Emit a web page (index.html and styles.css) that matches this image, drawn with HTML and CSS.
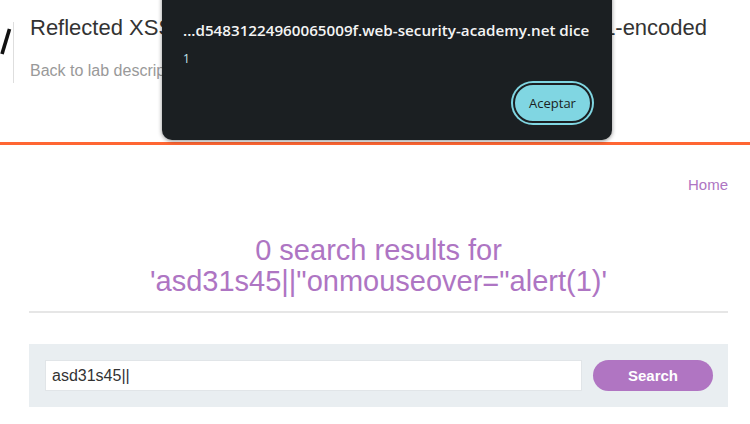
FILE: index.html
```html
<!DOCTYPE html>
<html lang="en">
<head>
<meta charset="utf-8">
<title>Reflected XSS into attribute with angle brackets HTML-encoded</title>
<link rel="stylesheet" href="styles.css">
</head>
<body>
<header class="academy-header">
  <div class="logo">
    <svg width="13" height="60" viewBox="0 0 13 60"><path d="M9.5 29 L2 54" stroke="#111" stroke-width="3.6" fill="none"/></svg>
  </div>
  <div class="divider"></div>
  <div class="title-block">
    <h2 class="lab-title">Reflected XSS<span class="title-rest"> into attribute with angle brackets HTML-encoded</span></h2>
    <a class="back-link" href="#">Back to lab description</a>
  </div>
</header>

<div class="dialog">
  <div class="dialog-title">...d54831224960065009f.web-security-academy.net dice</div>
  <div class="dialog-msg">1</div>
  <div class="dialog-actions">
    <button class="dialog-btn">Aceptar</button>
  </div>
</div>

<main class="container">
  <nav class="top-links"><a href="#">Home</a></nav>
  <section class="results">
    <h1 class="results-title">0 search results for<br>'asd31s45||"onmouseover="alert(1)'</h1>
    <hr class="rule">
  </section>
  <section class="search">
    <form class="search-form">
      <input class="search-input" type="text" value="asd31s45||">
      <button class="search-btn" type="button">Search</button>
    </form>
  </section>
</main>
</body>
</html>
```

FILE: styles.css
```css
* { box-sizing: border-box; }
html, body { margin: 0; padding: 0; background: #fff; }
body {
  font-family: "Liberation Sans", Arial, sans-serif;
  color: #333;
  width: 750px;
  height: 424px;
  overflow: hidden;
  position: relative;
}

.academy-header {
  display: flex;
  height: 145px;
  border-bottom: 3px solid #ff6633;
}
.logo { width: 13px; }
.logo svg { display: block; }
.divider {
  width: 1px;
  height: 61px;
  margin-top: 22px;
  background: #dedede;
}
.title-block { padding-left: 16px; padding-top: 14px; }
.lab-title {
  margin: 0;
  font-size: 22px;
  font-weight: normal;
  line-height: 28px;
  color: #333;
  white-space: nowrap;
}
.title-rest { word-spacing: 9.1px; }
.back-link {
  display: block;
  margin-top: 20px;
  font-size: 16px;
  line-height: 18px;
  color: #999;
  text-decoration: none;
}

.dialog {
  position: absolute;
  left: 162px;
  top: -12px;
  width: 450px;
  height: 152px;
  background: #1b1f22;
  border-radius: 10px;
  box-shadow: 0 1px 4px rgba(0,0,0,0.45);
  padding: 32px 20px 0 21px;
  font-family: "Open Sans", "Noto Sans", sans-serif;
}
.dialog-title {
  color: #f4f4f4;
  font-size: 15.2px;
  font-weight: 600;
  line-height: 20px;
  white-space: nowrap;
}
.dialog-msg {
  margin-top: 11px;
  color: #c6e6f0;
  font-size: 12px;
  line-height: 16px;
}
.dialog-actions {
  display: flex;
  justify-content: flex-end;
  margin-top: 16px;
}
.dialog-btn {
  width: 79px;
  height: 40px;
  border-radius: 20px;
  background: #80d6e2;
  border: 2px solid #1b1f22;
  box-shadow: 0 0 0 2px #80d6e2;
  color: #1b1f22;
  font-family: "Open Sans", "Noto Sans", sans-serif;
  font-size: 13px;
  padding: 0;
}

.container {
  margin: 0 22px 0 29px;
}
.top-links {
  display: flex;
  justify-content: flex-end;
  padding-top: 31px;
}
.top-links a {
  color: #ae75c3;
  font-size: 15px;
  line-height: 17px;
  text-decoration: none;
}
.results { padding-top: 42px; }
.results-title {
  margin: 0;
  text-align: center;
  font-size: 29px;
  font-weight: normal;
  line-height: 31px;
  color: #ae75c3;
}
.rule {
  margin: 14px 0 0 0;
  border: 0;
  height: 2px;
  background: #e6e6e6;
}
.search {
  margin-top: 31px;
  background: #e9eef1;
  padding: 16px 15px 16px 16px;
}
.search-form {
  display: flex;
  gap: 11px;
  align-items: center;
}
.search-input {
  flex: 1;
  height: 31px;
  border: 1px solid #e1e5e8;
  background: #fff;
  font-family: "Liberation Sans", Arial, sans-serif;
  font-size: 16px;
  color: #333;
  padding: 0 6px;
}
.search-btn {
  width: 120px;
  height: 31px;
  border: 0;
  border-radius: 16px;
  background: #b075c2;
  color: #fff;
  font-family: "Liberation Sans", Arial, sans-serif;
  font-weight: bold;
  font-size: 15px;
}
```
